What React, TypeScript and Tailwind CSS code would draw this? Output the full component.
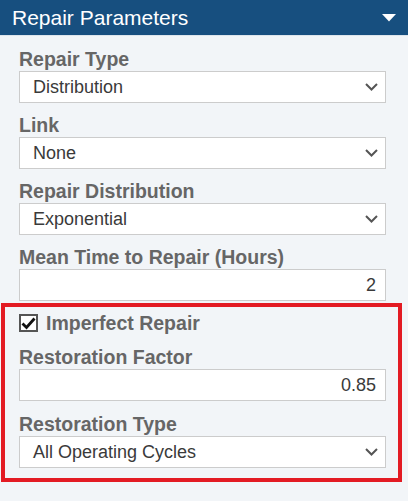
import React from 'react';

const font = { fontFamily: '"Liberation Sans", Arial, sans-serif' };

function Chevron() {
  return (
    <svg width="13" height="8" viewBox="0 0 13 8" className="shrink-0">
      <path d="M1 1 L6.5 6.5 L12 1" fill="none" stroke="#555" strokeWidth="2" />
    </svg>
  );
}

function Label({ text, pt = 'pt-[10px]' }: { text: string; pt?: string }) {
  return (
    <div className={`${pt} text-[19.5px] leading-[24px] font-bold text-[#666] whitespace-nowrap`}>{text}</div>
  );
}

function SelectBox({ value }: { value: string }) {
  return (
    <div className="h-[32px] bg-white border border-[#cccccc] flex items-center justify-between pl-[13px] pr-[7px] text-[18px] text-[#3a3a3a]">
      <span>{value}</span>
      <Chevron />
    </div>
  );
}

function NumberBox({ value }: { value: string }) {
  return (
    <input
      readOnly
      defaultValue={value}
      className="w-full h-[32px] bg-white border border-[#cccccc] text-right pr-[9px] text-[18px] text-[#3a3a3a] outline-none"
      style={font}
    />
  );
}

export default function App() {
  return (
    <div className="w-[408px] h-[501px] bg-[#f2f5f8] overflow-hidden" style={font}>
      {/* Panel header */}
      <div className="h-[36px] bg-[#174f7f] border-b border-[#dde5ec] flex items-center justify-between pl-[12px] pr-[12px]">
        <span className="text-[21px] leading-[35px] text-white">Repair Parameters</span>
        <svg width="14" height="8" viewBox="0 0 14 8">
          <polygon points="0,0 14,0 7,7.5" fill="#ffffff" />
        </svg>
      </div>

      <div className="pl-[19px] pr-[22px]">
        <Label text="Repair Type" pt="pt-[11px]" />
        <SelectBox value="Distribution" />
        <Label text="Link" />
        <SelectBox value="None" />
        <Label text="Repair Distribution" />
        <SelectBox value="Exponential" />
        <Label text="Mean Time to Repair (Hours)" />
        <NumberBox value="2" />
      </div>

      {/* Highlighted imperfect repair group */}
      <div className="mt-[2px] ml-[1px] w-[401px] border-[4px] border-[#e31b23] pl-[14px] pr-[12px] pb-[10px]">
        <div className="pt-[7px] h-[25px] flex items-center gap-[8px]">
          <div className="w-[19px] h-[18px] border-2 border-[#555] bg-white flex items-center justify-center">
            <svg width="15" height="13" viewBox="0 0 15 13">
              <path d="M1.5 6.5 L5.5 10.5 L13.5 1.5" fill="none" stroke="#111" strokeWidth="2.8" />
            </svg>
          </div>
          <span className="text-[19.5px] leading-[18px] font-bold text-[#666]">Imperfect Repair</span>
        </div>
        <Label text="Restoration Factor" pt="pt-[13px]" />
        <NumberBox value="0.85" />
        <Label text="Restoration Type" pt="pt-[11px]" />
        <SelectBox value="All Operating Cycles" />
      </div>
    </div>
  );
}
